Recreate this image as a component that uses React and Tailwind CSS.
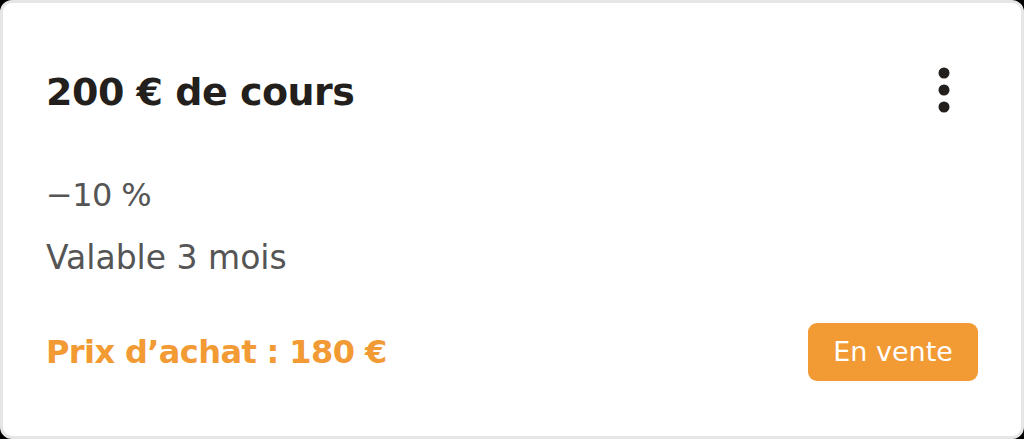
export default function App() {
  return (
    <div className="w-[1024px] h-[439px] bg-black">
      <div
        className="w-full h-full rounded-[12px] border-[3px] border-[#e6e6e6] bg-white flex flex-col pl-[43px] pr-[43px] pt-[67px]"
        style={{ fontFamily: '"DejaVu Sans", "Noto Sans", sans-serif' }}
      >
        <div className="flex items-start justify-between h-[44px]">
          <h1 className="text-[38px] leading-[44px] font-bold tracking-[-0.5px] text-[#231f1c]">
            200 € de cours
          </h1>
          <svg width="12" height="46" viewBox="0 0 12 46" className="-mt-[3px] mr-[28px]">
            <circle cx="6" cy="6" r="5.5" fill="#231f1c" />
            <circle cx="6" cy="23" r="5.5" fill="#231f1c" />
            <circle cx="6" cy="40" r="5.5" fill="#231f1c" />
          </svg>
        </div>
        <div className="mt-[61px] text-[32px] leading-[40px] tracking-[-0.6px] text-[#555555]">−10 %</div>
        <div className="mt-[23px] text-[33px] leading-[40px] text-[#555555]">Valable 3 mois</div>
        <div className="mt-[45px] flex items-center justify-between h-[58px]">
          <div className="text-[32px] leading-[40px] font-bold tracking-[-0.6px] text-[#f29a33]">
            Prix d’achat : 180 €
          </div>
          <div className="w-[170px] h-[58px] rounded-[9px] bg-[#f29a33] text-white text-[27px] flex items-center justify-center">
            En vente
          </div>
        </div>
      </div>
    </div>
  );
}
